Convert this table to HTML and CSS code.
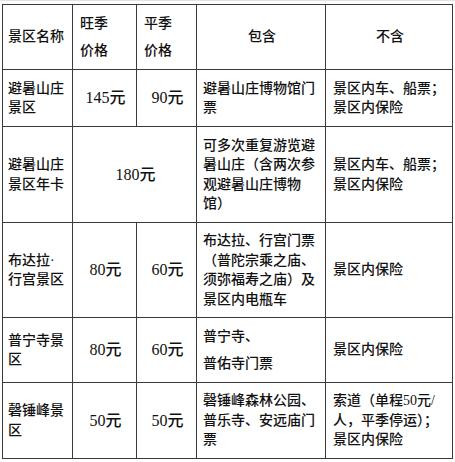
FILE: index.html
```html
<!DOCTYPE html>
<html lang="zh-CN">
<head>
<meta charset="utf-8">
<title>景区价格</title>
<link rel="stylesheet" href="styles.css">
</head>
<body>
<div class="frame">
<table class="price-table">
  <colgroup>
    <col class="c-name">
    <col class="c-peak">
    <col class="c-flat">
    <col class="c-inc">
    <col class="c-exc">
  </colgroup>
  <tr class="r-head">
    <td class="name">景区名称</td>
    <td class="two"><div class="l">旺季</div><div class="l">价格</div></td>
    <td class="two"><div class="l">平季</div><div class="l">价格</div></td>
    <td class="center">包含</td>
    <td class="center">不含</td>
  </tr>
  <tr class="r1">
    <td class="name">避暑山庄景区</td>
    <td class="price">145元</td>
    <td class="price">90元</td>
    <td class="text">避暑山庄博物馆门票</td>
    <td class="text ex">景区内车、船票；景区内保险</td>
  </tr>
  <tr class="r2">
    <td class="name">避暑山庄景区年卡</td>
    <td class="price" colspan="2">180元</td>
    <td class="text">可多次重复游览避暑山庄（含两次参观避暑山庄博物馆）</td>
    <td class="text ex">景区内车、船票；景区内保险</td>
  </tr>
  <tr class="r3">
    <td class="name">布达拉·行宫景区</td>
    <td class="price">80元</td>
    <td class="price">60元</td>
    <td class="text">布达拉、行宫门票（普陀宗乘之庙、须弥福寿之庙）及景区内电瓶车</td>
    <td class="text ex">景区内保险</td>
  </tr>
  <tr class="r4">
    <td class="name">普宁寺景区</td>
    <td class="price">80元</td>
    <td class="price">60元</td>
    <td class="text"><div class="p">普宁寺、</div><div class="p">普佑寺门票</div></td>
    <td class="text ex">景区内保险</td>
  </tr>
  <tr class="r5">
    <td class="name">磬锤峰景区</td>
    <td class="price">50元</td>
    <td class="price">50元</td>
    <td class="text">磬锤峰森林公园、普乐寺、安远庙门票</td>
    <td class="text ex">索道（单程50元/人，平季停运）；景区内保险</td>
  </tr>
</table>
</div>
</body>
</html>
```

FILE: styles.css
```css
html, body {
  margin: 0;
  padding: 0;
  background: #fff;
}

.frame {
  width: 455px;
  height: 462px;
  padding: 4px 0 0 2px;
  box-sizing: border-box;
  border-top: 1px solid #e2e2e2;
}

.price-table {
  border-collapse: collapse;
  table-layout: fixed;
  width: 451px;
  font-family: "Liberation Serif", "Noto Sans CJK SC", serif;
  font-size: 14px;
  font-weight: 500;
  line-height: 19.5px;
  color: #111;
  margin-top: -1px;
}

.c-name { width: 70px; }
.c-peak { width: 64px; }
.c-flat { width: 60px; }
.c-inc { width: 129px; }
.c-exc { width: 127px; }

.price-table td {
  border: 1.5px solid #3a3a3a;
  vertical-align: middle;
  padding: 0 4px 0 6px;
  word-break: break-all;
}

.r-head { height: 65px; }
.r1 { height: 57px; }
.r2 { height: 96px; }
.r3 { height: 95px; }
.r4 { height: 65px; }
.r5 { height: 76px; }

.price-table td.name {
  padding: 0 4px 0 5px;
}

.price-table td.two {
  padding-left: 7px;
}

.two .l + .l {
  margin-top: 8px;
}

.center {
  text-align: center;
}

.price {
  text-align: center;
  font-size: 16px;
}

.price-table td.ex {
  padding: 0 2px 0 7px;
}

.text .p + .p {
  margin-top: 8px;
}
```
